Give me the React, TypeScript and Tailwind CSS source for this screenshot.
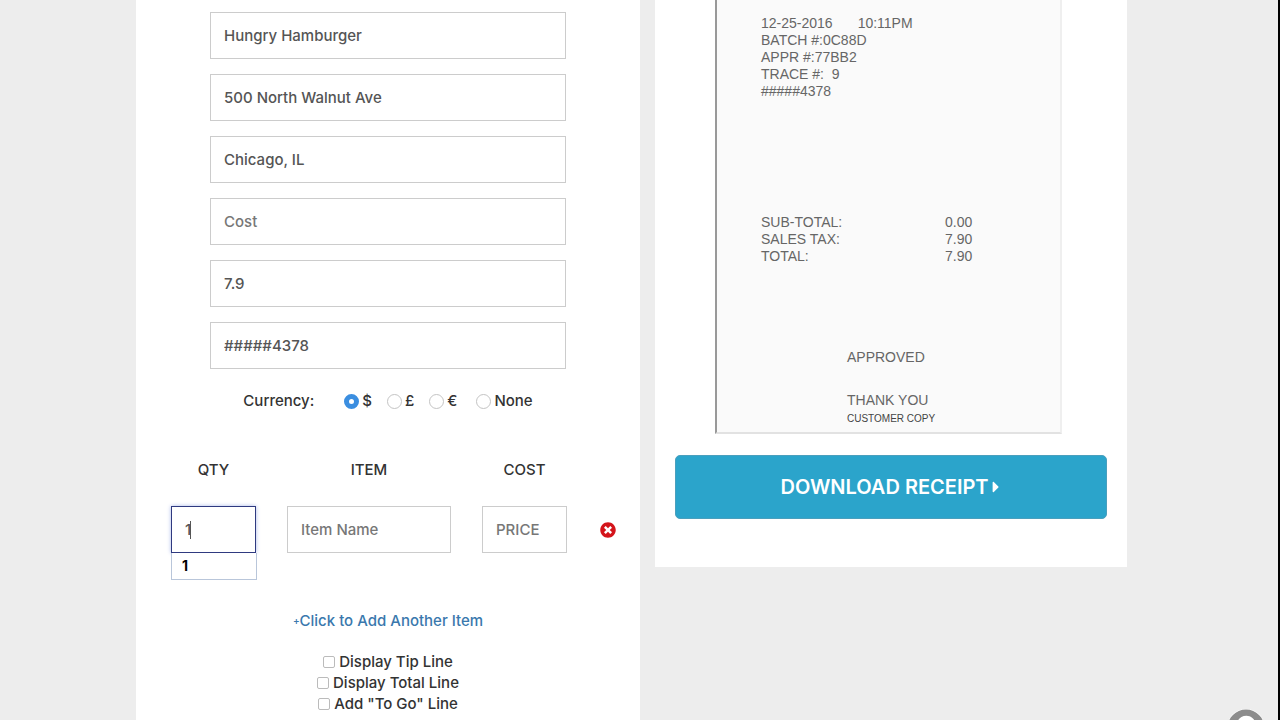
import { useState } from 'react';
import { FaCaretRight, FaQuestionCircle, FaTimesCircle } from 'react-icons/fa';

const merchantFields = [
  { id: 'name', label: 'Business name', value: 'Hungry Hamburger', placeholder: 'Name' },
  { id: 'address', label: 'Address', value: '500 North Walnut Ave', placeholder: 'Address' },
  { id: 'city', label: 'City and state', value: 'Chicago, IL', placeholder: 'City, State' },
  { id: 'cost', label: 'Cost', value: '', placeholder: 'Cost' },
  { id: 'tax', label: 'Tax', value: '7.9', placeholder: 'Tax' },
  { id: 'card', label: 'Card number', value: '#####4378', placeholder: 'Card' },
];

const currencies = [
  { id: 'usd', name: '$' },
  { id: 'gbp', name: '£' },
  { id: 'eur', name: '€' },
  { id: 'none', name: 'None' },
];

const lineOptions = [
  { id: 'tip', name: 'Display Tip Line' },
  { id: 'total', name: 'Display Total Line' },
  { id: 'togo', name: 'Add "To Go" Line' },
];

const totals = [
  { name: 'SUB-TOTAL:', amount: '0.00' },
  { name: 'SALES TAX:', amount: '7.90' },
  { name: 'TOTAL:', amount: '7.90' },
];

const inputClass =
  'block h-[47px] w-full min-w-0 border border-[#ccc] bg-white px-[13px] text-[15px] font-medium text-[#555] outline-none placeholder:text-[#777]';

const CurrencyPicker = () => {
  const [currency, setCurrency] = useState('usd');

  return (
    <div role="radiogroup" aria-labelledby="currency-label" className="mt-[21px] flex h-[22px] items-center justify-center">
      <span id="currency-label" className="mr-[30px]">Currency:</span>
      <div className="flex items-center gap-[15px]">
        {currencies.map((item) => (
          <label key={item.id} htmlFor={item.id} className="flex items-center gap-[3px] last:ml-1">
            <input
              id={item.id}
              type="radio"
              name="currency"
              checked={currency === item.id}
              onChange={() => setCurrency(item.id)}
              className="h-[15px] w-[15px] appearance-none rounded-full border border-[#c4c4c4] bg-white checked:border-[5px] checked:border-[#3b8ee0]"
            />
            {item.name}
          </label>
        ))}
      </div>
    </div>
  );
};

const ItemRow = () => {
  const [qty, setQty] = useState('1');

  return (
    <div className="mt-[47px] grid grid-cols-[85px_1fr_85px_20px] items-center gap-x-[31px] gap-y-[25px] pl-[35px] pr-[22px]">
      <label htmlFor="qty" className="text-center leading-[22px]">QTY</label>
      <label htmlFor="item" className="text-center leading-[22px]">ITEM</label>
      <label htmlFor="price" className="text-center leading-[22px]">COST</label>
      <span />
      <div className="relative">
        <input
          id="qty"
          value={qty}
          onChange={(e) => setQty(e.target.value)}
          className="block h-[47px] w-full border border-[#2f3a80] bg-white px-[13px] text-[15px] font-medium text-[#555] caret-transparent shadow-[0_0_4px_#a9b8ea] outline-none"
        />
        <span className="absolute left-[19px] top-[15px] h-[18px] w-px bg-[#555]" />
        <ul className="absolute left-0 top-full w-[86px] border border-t-0 border-[#b9c6da] bg-white">
          <li className="h-[26px] px-[10px] text-[14px] font-bold leading-[26px] text-black">1</li>
        </ul>
      </div>
      <input id="item" placeholder="Item Name" className={inputClass} />
      <input id="price" placeholder="PRICE" className={inputClass} />
      <button type="button" aria-label="Remove item" className="flex justify-center">
        <FaTimesCircle className="h-4 w-4 text-[#d4151b]" />
      </button>
    </div>
  );
};

const Receipt = () => (
  <div className="ml-10 mr-[45px] border-b-2 border-l-2 border-r-2 border-b-[#e2e2e2] border-l-[#999] border-r-[#efefef] bg-[#fafafa] pb-[5px] pl-[44px] pt-[15px] font-['Liberation_Sans',Arial,sans-serif] text-[14px] font-normal leading-[17px] text-[#666]">
    <p className="flex gap-[25px]">
      <span>12-25-2016</span>
      <span>10:11PM</span>
    </p>
    <p>BATCH #:0C88D</p>
    <p>APPR #:77BB2</p>
    <p className="whitespace-pre">TRACE #:  9</p>
    <p>#####4378</p>
    <table className="mt-[114px]">
      <tbody>
        {totals.map((row) => (
          <tr key={row.name}>
            <th scope="row" className="w-[184px] p-0 text-left font-normal">{row.name}</th>
            <td className="p-0">{row.amount}</td>
          </tr>
        ))}
      </tbody>
    </table>
    <div className="ml-[86px] mt-[84px]">
      <p>APPROVED</p>
      <p className="mt-[26px]">THANK YOU</p>
      <p className="mt-px text-[10px] text-[#444]">CUSTOMER COPY</p>
    </div>
  </div>
);

export default function App() {
  return (
    <div className="min-h-screen border-r-2 border-black bg-[#ededed] font-[Inter,sans-serif] text-[15px] font-medium text-[#333]">
      <main className="grid grid-cols-[504fr_472fr] items-start gap-[15px] pl-[136px] pr-[151px]">
        <form className="min-h-screen bg-white" onSubmit={(e) => e.preventDefault()}>
          <div className="flex flex-col gap-[15px] px-[74px] pt-3">
            {merchantFields.map((field) => (
              <input
                key={field.id}
                aria-label={field.label}
                defaultValue={field.value}
                placeholder={field.placeholder}
                className={inputClass}
              />
            ))}
          </div>
          <CurrencyPicker />
          <ItemRow />
          <p className="mt-14 text-center leading-[22px]">
            <a href="#add" className="text-[#3a78ad]">
              <span className="align-[2px] text-[10px]">+</span>Click to Add Another Item
            </a>
          </p>
          <div className="mt-[19px] flex flex-col items-center">
            {lineOptions.map((option) => (
              <label key={option.id} htmlFor={option.id} className="flex items-center gap-1 leading-[21px]">
                <input
                  id={option.id}
                  type="checkbox"
                  className="h-3 w-3 appearance-none rounded-[2px] border border-[#bbb] bg-white checked:bg-[#3b8ee0]"
                />
                {option.name}
              </label>
            ))}
          </div>
        </form>

        <section className="bg-white px-5 pb-12">
          <Receipt />
          <button
            type="button"
            className="mt-[21px] flex h-16 w-full items-center justify-center rounded-[5px] border border-[#4a9fbd] bg-[#2ba4cb] text-[20px] font-semibold text-white"
          >
            DOWNLOAD RECEIPT
            <FaCaretRight className="ml-px h-[18px] w-3" />
          </button>
        </section>
      </main>

      <button type="button" aria-label="Help" className="fixed -bottom-[27px] right-[15px] text-[#8c8c8c]">
        <span className="block rounded-full bg-white">
          <FaQuestionCircle className="h-[38px] w-[38px]" />
        </span>
      </button>
    </div>
  );
}
